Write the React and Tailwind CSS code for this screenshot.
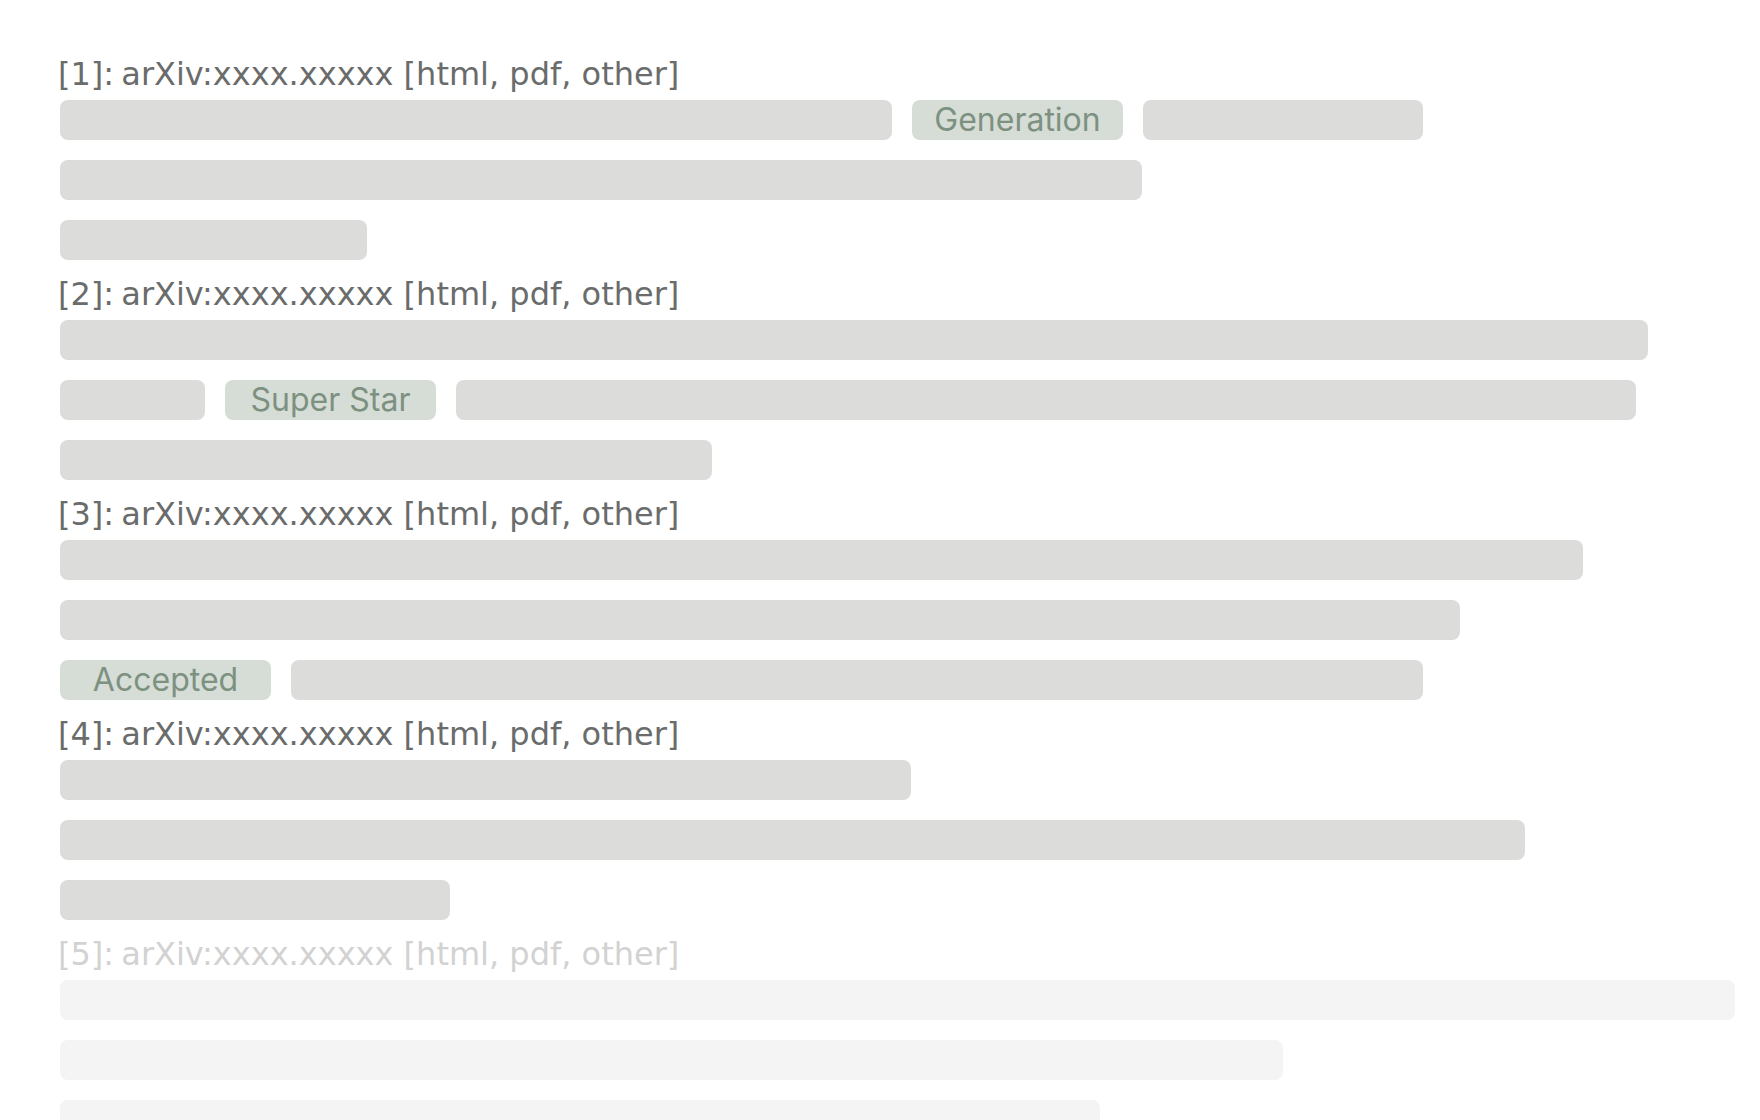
import React from 'react';

// skeleton list of arXiv results, widths in px per row
const items = [
  {
    rows: [[832, 'Generation', 280], [1082], [307]],
  },
  {
    rows: [[1588], [145, 'Super Star', 1180], [652]],
  },
  {
    rows: [[1523], [1400], ['Accepted', 1132]],
  },
  {
    rows: [[851], [1465], [390]],
  },
  {
    rows: [[1675], [1223], [1040]],
    faded: true,
  },
];

const Bar = ({ w }) => (
  <div className="h-10 rounded-lg bg-[#dcdcdb] shrink-0" style={{ width: w }} />
);

const Tag = ({ label }) => (
  <div className="h-10 w-[211px] rounded-lg bg-[#d5ddd6] flex items-center justify-center shrink-0 text-[32px] text-[#7d9181] font-['Inter',sans-serif] leading-none">
    {label}
  </div>
);

export default function App() {
  return (
    <div className="h-screen overflow-hidden bg-white pt-10 pl-[60px]">
      {items.map((item, i) => (
        <div key={i} className={item.faded ? 'opacity-30' : ''}>
          <div className="h-[60px] pt-[10px] text-[32px] leading-normal text-[#6a6c6b] font-['DejaVu_Sans',sans-serif] -ml-[2px] whitespace-nowrap">
            <span className="mr-[-3px]">[{i + 1}]:</span> arXiv:xxxx.xxxxx [html, pdf, other]
          </div>
          <div className="flex flex-col gap-5">
            {item.rows.map((row, j) => (
              <div key={j} className="flex gap-5">
                {row.map((cell, k) =>
                  typeof cell === 'number' ? <Bar key={k} w={cell} /> : <Tag key={k} label={cell} />
                )}
              </div>
            ))}
          </div>
        </div>
      ))}
    </div>
  );
}
